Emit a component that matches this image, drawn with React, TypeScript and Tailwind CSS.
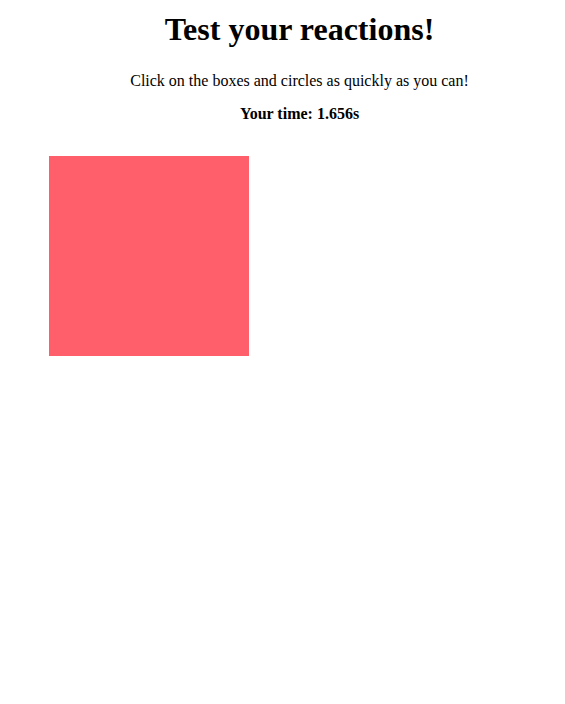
export default function App() {
  return (
    <div className="min-h-screen bg-white text-black font-['Liberation_Serif','Times_New_Roman',serif]">
      <div className="pl-[34px]">
        <h1 className="pt-[11px] text-center text-[32px] font-bold leading-[37px]">
          Test your reactions!
        </h1>
        <p className="mt-[24px] text-center text-[16px] leading-[18px]">
          Click on the boxes and circles as quickly as you can!
        </p>
        <p className="mt-[15px] text-center text-[16px] font-bold leading-[18px]">
          Your time: 1.656s
        </p>
      </div>
      <div className="ml-[49px] mt-[33px] h-[200px] w-[200px] bg-[#fe5f6b]" />
    </div>
  );
}
